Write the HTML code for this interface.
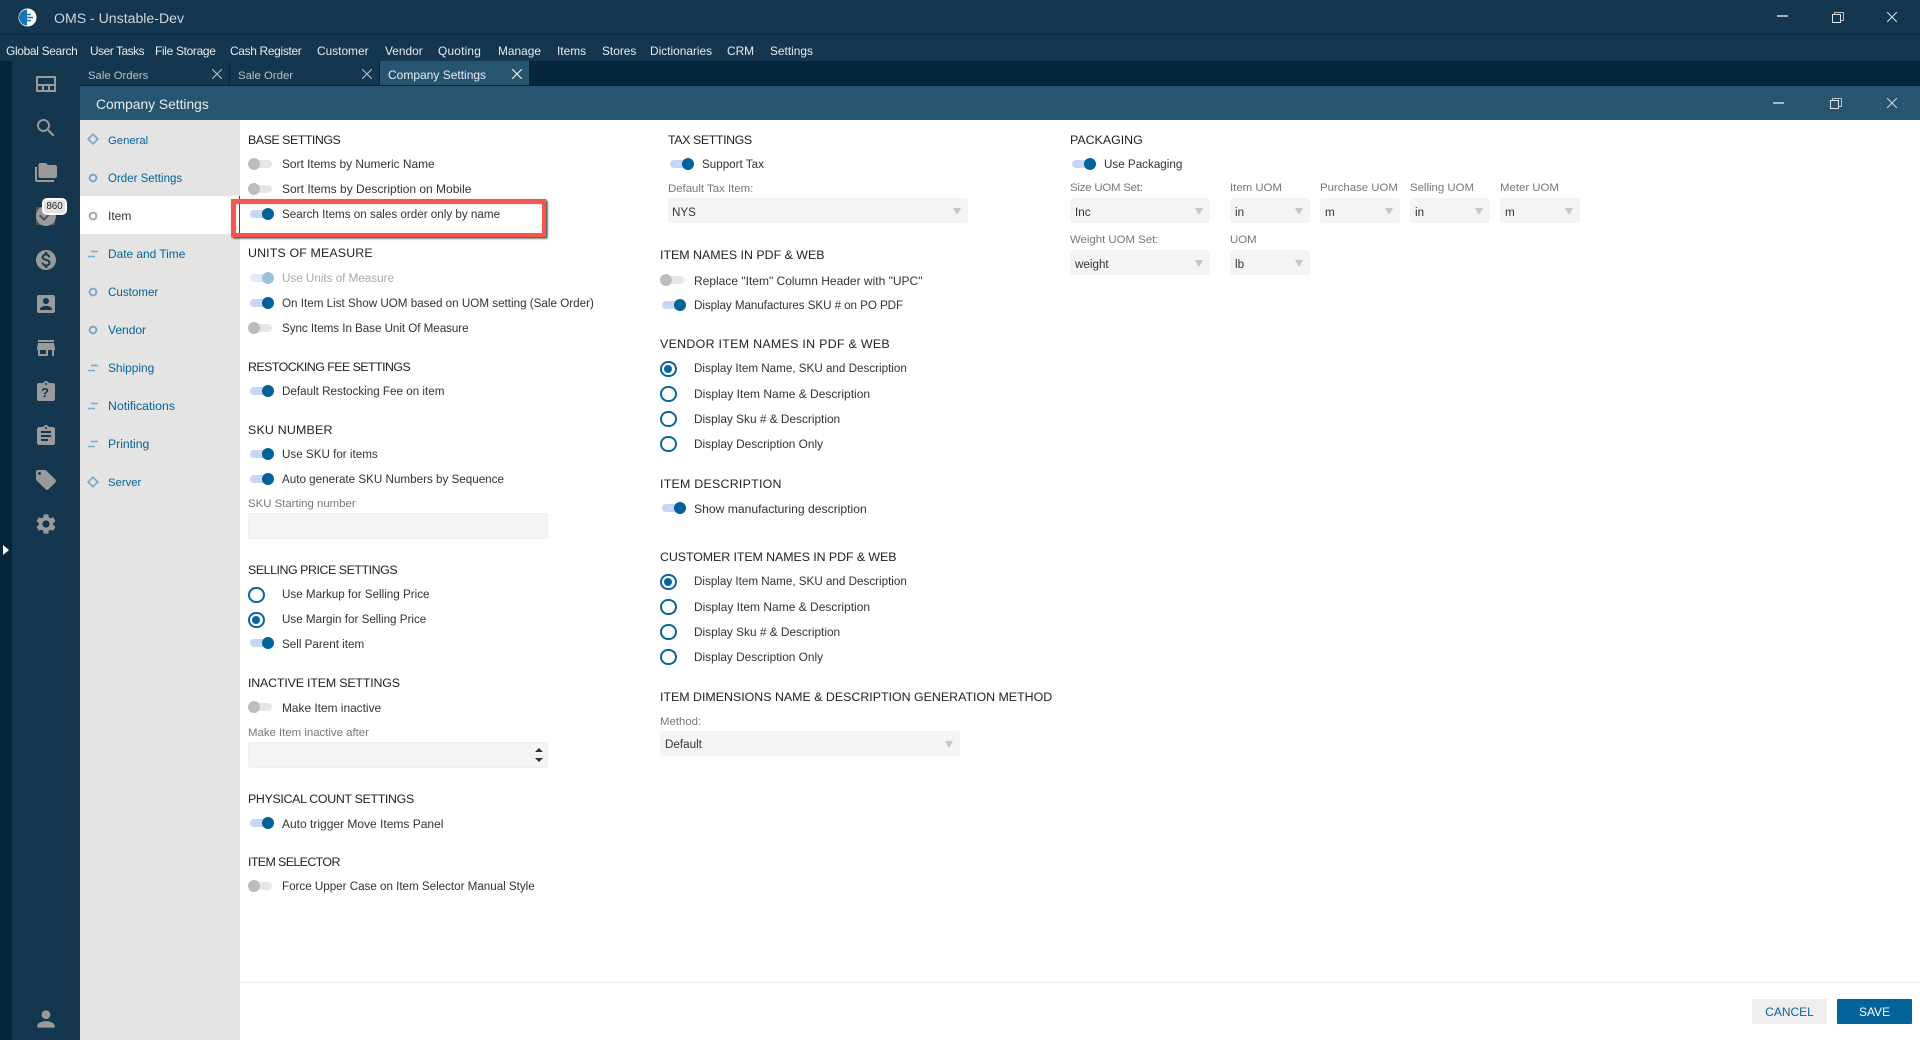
<!DOCTYPE html>
<html lang="en"><head><meta charset="utf-8"><title>OMS - Unstable-Dev</title>
<style>
html,body{margin:0;padding:0;width:1920px;height:1040px;overflow:hidden;background:#fff;font-family:"Liberation Sans",sans-serif;font-size:11.65px;color:#333}
div,span,svg{position:absolute}
.t{line-height:16px;white-space:nowrap;display:block}
.b{margin-top:1px}
.w{font-size:12px}
.m{color:#e6ecf0;top:43px;font-size:11.9px}
.n{color:#05639b;left:108px;font-size:12px}
.h{color:#222;font-size:12.4px}
.l{color:#777;font-size:11.4px}
.s{background:#f4f4f4;border-radius:3px;height:25px}
.s:after{content:"";position:absolute;right:7px;top:10px;border-left:4.5px solid transparent;border-right:4.5px solid transparent;border-top:7px solid #c6c6c6}
.tg{width:26px;height:12px}
.tg i{position:absolute;display:block}
.tg .tr{left:2px;top:2px;width:22px;height:8px;border-radius:4px;background:#c7d6f6}
.tg .kn{left:14px;top:0;width:12px;height:12px;border-radius:50%;background:#02629b}
.tg.off .tr{left:0;width:24px;background:#e6e6e6}
.tg.off .kn{left:0;background:#bcbcbc}
.tg.dis .tr{background:#e3eaf8}
.tg.dis .kn{background:#9cc3dc}
.r{width:12.6px;height:12.6px;border:2px solid #0a659c;border-radius:50%;background:#fff}
.r.c:after{content:"";position:absolute;left:2.3px;top:2.3px;width:8px;height:8px;border-radius:50%;background:#0a659c}
.ic{left:33.5px;width:24px;height:24px;fill:#9a9a9a}
.ni{left:87px;width:12px;height:12px;fill:none;stroke:#7da9c6;stroke-width:2}
</style></head><body>
<div style="left:0;top:0;width:1920px;height:61px;background:#14374f"></div>
<div style="left:0;top:34px;width:1920px;height:1px;background:#0c2a40"></div>
<div style="left:0;top:61px;width:1920px;height:25px;background:#07263c"></div>
<div style="left:0;top:61px;width:12px;height:979px;background:#07263c"></div>
<div style="left:12px;top:61px;width:68px;height:979px;background:#14374f"></div>

<svg style="left:18px;top:8px" width="19" height="19" viewBox="0 0 19 19"><circle cx="9.5" cy="9.5" r="9" fill="#fff"/><path d="M9 1.5A8 8 0 0 0 9 17.5Z" fill="#1a75b8"/><path d="M6 6.5h7M4 9.5h11M6 12.5h7" stroke="#1a75b8" stroke-width="1.5"/></svg>
<span class="t" style="left:54px;top:10px;font-size:14.1px;color:#ccd6dc">OMS - Unstable-Dev</span>

<span class="t m" style="left:6px;letter-spacing:-.3px">Global Search</span>
<span class="t m" style="left:90px;letter-spacing:-.45px">User Tasks</span>
<span class="t m" style="left:155px;letter-spacing:-.3px">File Storage</span>
<span class="t m" style="left:230px;letter-spacing:-.3px">Cash Register</span>
<span class="t m" style="left:317px">Customer</span>
<span class="t m" style="left:385px">Vendor</span>
<span class="t m" style="left:438px;letter-spacing:.2px">Quoting</span>
<span class="t m" style="left:498px">Manage</span>
<span class="t m" style="left:557px">Items</span>
<span class="t m" style="left:602px">Stores</span>
<span class="t m" style="left:650px">Dictionaries</span>
<span class="t m" style="left:727px">CRM</span>
<span class="t m" style="left:770px">Settings</span>

<svg style="left:1777px;top:15px" width="11" height="3"><rect width="11" height="2" fill="#a9b5bd"/></svg>
<svg style="left:1832px;top:12px" width="12" height="11" viewBox="0 0 12 11" fill="none" stroke="#dfe5ea"><rect x=".5" y="2.5" width="8" height="8"/><path d="M2.5 2.5V.5h9v8H8.500" stroke="#b6c2cb"/></svg>
<svg style="left:1887px;top:12px" width="10" height="10" stroke="#d0d8de" stroke-width="1.1"><path d="M0 0L10 10M10 0L0 10"/></svg>

<div style="left:80px;top:61px;width:149px;height:24px;background:#14374f"></div>
<div style="left:230px;top:61px;width:149px;height:24px;background:#14374f"></div>
<div style="left:380px;top:61px;width:149px;height:24px;background:#27556f"></div>
<span class="t b" style="left:88px;top:67px;color:#b3c0c9;font-size:11.3px">Sale Orders</span>
<span class="t b" style="left:238px;top:67px;color:#b3c0c9;font-size:11.4px">Sale Order</span>
<span class="t" style="left:388px;top:67px;color:#e6ecf0;font-size:12px">Company Settings</span>
<svg style="left:212px;top:69px" width="10" height="10" stroke="#b3c0c9" stroke-width="1.1"><path d="M0 0L10 10M10 0L0 10"/></svg>
<svg style="left:362px;top:69px" width="10" height="10" stroke="#b3c0c9" stroke-width="1.1"><path d="M0 0L10 10M10 0L0 10"/></svg>
<svg style="left:512px;top:69px" width="10" height="10" stroke="#f0f4f6" stroke-width="1.1"><path d="M0 0L10 10M10 0L0 10"/></svg>

<div style="left:80px;top:86px;width:1840px;height:34px;background:#27556f"></div>
<span class="t" style="left:96px;top:96.5px;font-size:13.8px;color:#e6ecf0">Company Settings</span>
<svg style="left:1773px;top:102px" width="11" height="3"><rect width="11" height="2" fill="#a9b5bd"/></svg>
<svg style="left:1830px;top:98px" width="12" height="11" viewBox="0 0 12 11" fill="none" stroke="#dfe5ea"><rect x=".5" y="2.5" width="8" height="8"/><path d="M2.5 2.5V.5h9v8H8.500" stroke="#b6c2cb"/></svg>
<svg style="left:1887px;top:98px" width="10" height="10" stroke="#d0d8de" stroke-width="1.1"><path d="M0 0L10 10M10 0L0 10"/></svg>

<!-- sidebar icons -->
<svg class="ic" style="top:72px" viewBox="0 0 24 24"><path d="M2 4h20v16H2zM4 6v6h16V6zM4 14v4h4v-4zM10 14v4h4v-4zM16 14v4h4v-4z" fill-rule="evenodd"/></svg>
<svg class="ic" style="top:116px" viewBox="0 0 24 24"><path d="M15.5 14h-.79l-.28-.27C15.41 12.59 16 11.11 16 9.5 16 5.91 13.09 3 9.5 3S3 5.91 3 9.5 5.91 16 9.5 16c1.61 0 3.09-.59 4.23-1.57l.27.28v.79l5 4.99L20.49 19l-4.99-5zm-6 0C7.01 14 5 11.99 5 9.5S7.01 5 9.5 5 14 7.01 14 9.5 11.99 14 9.5 14z"/></svg>
<svg class="ic" style="top:160px" viewBox="0 0 24 24"><path d="M3 7H1v13c0 1.1.9 2 2 2h17v-2H3V7zM21 5h-7l-2-2H6.500c-1.100 0-2 .9-2 2v11c0 1.100.9 2 2 2H21c1.100 0 2-.9 2-2V7c0-1.100-.9-2-2-2z"/></svg>
<div style="left:36px;top:207px;width:19px;height:18px;background:#555"></div>
<svg class="ic" style="top:204px" viewBox="0 0 24 24"><path d="M12 2C6.48 2 2 6.48 2 12s4.48 10 10 10 10-4.48 10-10S17.52 2 12 2zm-2 15l-5-5 1.41-1.41L10 14.17l7.59-7.59L19 8l-9 9z"/></svg>
<div style="left:42px;top:198px;width:21px;height:13px;background:#e2e2e2;border:2px solid #fff;border-radius:5px"></div>
<span class="t" style="left:44px;top:198px;width:21px;text-align:center;font-size:9.8px;color:#222;line-height:17px">860</span>
<svg class="ic" style="top:248px" viewBox="0 0 24 24"><path d="M12 2C6.48 2 2 6.48 2 12s4.48 10 10 10 10-4.48 10-10S17.52 2 12 2zm1.41 16.09V20h-2.67v-1.93c-1.71-.36-3.16-1.46-3.27-3.4h1.96c.1 1.05.82 1.87 2.65 1.87 1.96 0 2.4-.98 2.4-1.59 0-.83-.44-1.61-2.67-2.14-2.48-.6-4.18-1.62-4.18-3.67 0-1.72 1.39-2.84 3.11-3.21V4h2.67v1.95c1.86.45 2.79 1.86 2.85 3.39H14.3c-.05-1.11-.64-1.87-2.22-1.87-1.5 0-2.4.68-2.4 1.64 0 .84.65 1.39 2.67 1.91s4.18 1.39 4.18 3.91c-.01 1.83-1.38 2.83-3.12 3.16z"/></svg>
<svg class="ic" style="top:292px" viewBox="0 0 24 24"><path d="M3 5v14c0 1.1.89 2 2 2h14c1.1 0 2-.9 2-2V5c0-1.1-.9-2-2-2H5c-1.11 0-2 .9-2 2zm12 4c0 1.66-1.34 3-3 3s-3-1.34-3-3 1.34-3 3-3 3 1.34 3 3zm-9 8c0-2 4-3.1 6-3.1s6 1.1 6 3.1v1H6v-1z"/></svg>
<svg class="ic" style="top:336px" viewBox="0 0 24 24"><path d="M20 4H4v2h16V4zm1 10v-2l-1-5H4l-1 5v2h1v6h10v-6h4v6h2v-6h1zm-9 4H6v-4h6v4z"/></svg>
<svg class="ic" style="top:380px" viewBox="0 0 24 24"><path d="M19 3h-4.18C14.4 1.84 13.3 1 12 1c-1.3 0-2.4.84-2.82 2H5c-1.1 0-2 .9-2 2v14c0 1.1.9 2 2 2h14c1.1 0 2-.9 2-2V5c0-1.1-.9-2-2-2zm-7 0c.55 0 1 .45 1 1s-.45 1-1 1-1-.45-1-1 .45-1 1-1z"/></svg>
<span class="t" style="left:41px;top:385px;font-size:13px;font-weight:bold;color:#14374f">?</span>
<svg class="ic" style="top:424px" viewBox="0 0 24 24"><path d="M19 3h-4.18C14.4 1.84 13.3 1 12 1c-1.3 0-2.4.84-2.82 2H5c-1.1 0-2 .9-2 2v14c0 1.1.9 2 2 2h14c1.1 0 2-.9 2-2V5c0-1.1-.9-2-2-2zm-7 0c.55 0 1 .45 1 1s-.45 1-1 1-1-.45-1-1 .45-1 1-1zm2 14H7v-2h7v2zm3-4H7v-2h10v2zm0-4H7V7h10v2z"/></svg>
<svg class="ic" style="top:468px" viewBox="0 0 24 24"><path d="M21.41 11.58l-9-9C12.05 2.22 11.55 2 11 2H4c-1.1 0-2 .9-2 2v7c0 .55.22 1.05.59 1.42l9 9c.36.36.86.58 1.41.58.55 0 1.05-.22 1.41-.59l7-7c.37-.36.59-.86.59-1.41 0-.55-.23-1.06-.59-1.42zM5.5 7C4.67 7 4 6.33 4 5.5S4.67 4 5.5 4 7 4.67 7 5.5 6.33 7 5.5 7z"/></svg>
<svg class="ic" style="top:512px" viewBox="0 0 24 24"><path d="M19.14 12.94c.04-.3.06-.61.06-.94 0-.32-.02-.64-.07-.94l2.03-1.58c.18-.14.23-.41.12-.61l-1.92-3.32c-.12-.22-.37-.29-.59-.22l-2.39.96c-.5-.38-1.03-.7-1.62-.94l-.36-2.54c-.04-.24-.24-.41-.48-.41h-3.84c-.24 0-.43.17-.47.41l-.36 2.54c-.59.24-1.13.57-1.62.94l-2.39-.96c-.22-.08-.47 0-.59.22L2.74 8.87c-.12.21-.08.47.12.61l2.03 1.58c-.05.3-.09.63-.09.94s.02.64.07.94l-2.03 1.58c-.18.14-.23.41-.12.61l1.92 3.32c.12.22.37.29.59.22l2.39-.96c.5.38 1.03.7 1.62.94l.36 2.54c.05.24.24.41.48.41h3.84c.24 0 .44-.17.47-.41l.36-2.54c.59-.24 1.13-.56 1.62-.94l2.39.96c.22.08.47 0 .59-.22l1.92-3.32c.12-.22.07-.47-.12-.61l-2.01-1.58zM12 15.6c-1.98 0-3.6-1.62-3.6-3.6s1.62-3.6 3.6-3.6 3.6 1.62 3.6 3.6-1.62 3.6-3.6 3.6z"/></svg>
<svg style="left:3px;top:545px" width="6" height="10"><path d="M0 0L6 5L0 10Z" fill="#fff"/></svg>
<svg class="ic" style="top:1006px;width:26px;height:26px;left:32.5px" viewBox="0 0 24 24"><path d="M12 12c2.21 0 4-1.79 4-4s-1.79-4-4-4-4 1.79-4 4 1.79 4 4 4zm0 2c-2.67 0-8 1.34-8 4v2h16v-2c0-2.66-5.33-4-8-4z"/></svg>

<!-- left nav -->
<div style="left:80px;top:120px;width:160px;height:920px;background:#e4e4e4"></div>
<div style="left:80px;top:196px;width:160px;height:38px;background:#fff"></div>
<div style="left:238.5px;top:196px;width:1.5px;height:38px;background:#05639b"></div>

<svg class="ni" style="top:133px" viewBox="0 0 12 12"><path d="M6 1.2L10.800 6 6 10.800 1.2 6Z" stroke-width="1.7"/></svg>
<svg class="ni" style="top:171.5px" viewBox="0 0 12 12"><circle cx="6" cy="6" r="3.4"/></svg>
<svg class="ni" style="top:209.5px;stroke:#a8a8a8" viewBox="0 0 12 12"><circle cx="6" cy="6" r="3.4"/></svg>
<svg class="ni" style="top:247.5px" viewBox="0 0 12 12"><path d="M4 3.5h7M1 8.5h7" stroke-width="1.6"/></svg>
<svg class="ni" style="top:285.5px" viewBox="0 0 12 12"><circle cx="6" cy="6" r="3.4"/></svg>
<svg class="ni" style="top:323.5px" viewBox="0 0 12 12"><circle cx="6" cy="6" r="3.4"/></svg>
<svg class="ni" style="top:361.5px" viewBox="0 0 12 12"><path d="M4 3.5h7M1 8.5h7" stroke-width="1.6"/></svg>
<svg class="ni" style="top:399.5px" viewBox="0 0 12 12"><path d="M4 3.5h7M1 8.5h7" stroke-width="1.6"/></svg>
<svg class="ni" style="top:437.5px" viewBox="0 0 12 12"><path d="M4 3.5h7M1 8.5h7" stroke-width="1.6"/></svg>
<svg class="ni" style="top:475.5px" viewBox="0 0 12 12"><path d="M6 1.2L10.800 6 6 10.800 1.2 6Z" stroke-width="1.7"/></svg>

<span class="t n b" style="top:132px;font-size:11.3px">General</span>
<span class="t n b" style="top:170px;font-size:11.5px">Order Settings</span>
<span class="t n" style="top:208px;color:#333">Item</span>
<span class="t n" style="top:246px;font-size:11.9px">Date and Time</span>
<span class="t n b" style="top:284px;font-size:11.6px">Customer</span>
<span class="t n" style="top:322px">Vendor</span>
<span class="t n" style="top:360px;font-size:11.9px">Shipping</span>
<span class="t n" style="top:398px;font-size:12.3px">Notifications</span>
<span class="t n" style="top:436px;font-size:12.2px">Printing</span>
<span class="t n b" style="top:474px;font-size:11.3px">Server</span>

<!-- column 1 -->
<span class="t h" style="left:248px;top:132px;letter-spacing:-.47px">BASE SETTINGS</span>
<div class="tg off" style="left:248px;top:158px"><i class="tr"></i><i class="kn"></i></div><span class="t" style="left:282px;top:156px;font-size:11.9px">Sort Items by Numeric Name</span>
<div class="tg off" style="left:248px;top:183px"><i class="tr"></i><i class="kn"></i></div><span class="t w" style="left:282px;top:181px">Sort Items by Description on Mobile</span>
<div class="tg" style="left:248px;top:208px"><i class="tr"></i><i class="kn"></i></div><span class="t b" style="left:282px;top:206px">Search Items on sales order only by name</span>
<div style="left:231px;top:199px;width:307px;height:30px;border:4px solid #f4574e;box-shadow:1.5px 1.5px 2px #444, inset 1px 1px 1px #777"></div>
<span class="t h" style="left:248px;top:245px;letter-spacing:.14px">UNITS OF MEASURE</span>
<div class="tg dis" style="left:248px;top:272px"><i class="tr"></i><i class="kn"></i></div><span class="t b" style="left:282px;top:270px;color:#aaa">Use Units of Measure</span>
<div class="tg" style="left:248px;top:297px"><i class="tr"></i><i class="kn"></i></div><span class="t b" style="left:282px;top:295px">On Item List Show UOM based on UOM setting (Sale Order)</span>
<div class="tg off" style="left:248px;top:322px"><i class="tr"></i><i class="kn"></i></div><span class="t b" style="left:282px;top:320px;letter-spacing:-.05px">Sync Items In Base Unit Of Measure</span>
<span class="t h" style="left:248px;top:359px;letter-spacing:-.54px">RESTOCKING FEE SETTINGS</span>
<div class="tg" style="left:248px;top:385px"><i class="tr"></i><i class="kn"></i></div><span class="t b" style="left:282px;top:383px">Default Restocking Fee on item</span>
<span class="t h" style="left:248px;top:422px;letter-spacing:.2px">SKU NUMBER</span>
<div class="tg" style="left:248px;top:448px"><i class="tr"></i><i class="kn"></i></div><span class="t b" style="left:282px;top:446px">Use SKU for items</span>
<div class="tg" style="left:248px;top:473px"><i class="tr"></i><i class="kn"></i></div><span class="t b" style="left:282px;top:471px">Auto generate SKU Numbers by Sequence</span>
<span class="t l" style="left:248px;top:496px">SKU Starting number</span>
<div style="left:247.5px;top:513px;width:298px;height:24px;background:#f4f4f4;border:1px solid #eee;border-radius:2px"></div>
<span class="t h" style="left:248px;top:562px;letter-spacing:-.45px">SELLING PRICE SETTINGS</span>
<div class="r" style="left:248px;top:586.5px"></div><span class="t b" style="left:282px;top:586px">Use Markup for Selling Price</span>
<div class="r c" style="left:248px;top:611.5px"></div><span class="t b" style="left:282px;top:611px">Use Margin for Selling Price</span>
<div class="tg" style="left:248px;top:637px"><i class="tr"></i><i class="kn"></i></div><span class="t b" style="left:282px;top:636px">Sell Parent item</span>
<span class="t h" style="left:248px;top:675px;letter-spacing:-.17px">INACTIVE ITEM SETTINGS</span>
<div class="tg off" style="left:248px;top:701px"><i class="tr"></i><i class="kn"></i></div><span class="t w" style="left:282px;top:700px;font-size:11.9px">Make Item inactive</span>
<span class="t l" style="left:248px;top:725px">Make Item inactive after</span>
<div style="left:247.5px;top:742px;width:298px;height:24px;background:#f4f4f4;border:1px solid #eee;border-radius:2px"></div>
<svg style="left:535px;top:747px" width="8" height="16"><path d="M0 5L4 1L8 5ZM0 11L8 11L4 15Z" fill="#333"/></svg>
<span class="t h" style="left:248px;top:791px;letter-spacing:-.33px">PHYSICAL COUNT SETTINGS</span>
<div class="tg" style="left:248px;top:817px"><i class="tr"></i><i class="kn"></i></div><span class="t w" style="left:282px;top:816px">Auto trigger Move Items Panel</span>
<span class="t h" style="left:248px;top:854px;letter-spacing:-.6px">ITEM SELECTOR</span>
<div class="tg off" style="left:248px;top:880px"><i class="tr"></i><i class="kn"></i></div><span class="t b" style="left:282px;top:878px;letter-spacing:-.02px">Force Upper Case on Item Selector Manual Style</span>

<!-- column 2 -->
<span class="t h" style="left:668px;top:132px;letter-spacing:-.4px">TAX SETTINGS</span>
<div class="tg" style="left:668px;top:158px"><i class="tr"></i><i class="kn"></i></div><span class="t b" style="left:702px;top:156px">Support Tax</span>
<span class="t l" style="left:668px;top:181px">Default Tax Item:</span>
<div class="s" style="left:668px;top:198px;width:300px"></div><span class="t b" style="left:672px;top:204px">NYS</span>
<span class="t h" style="left:660px;top:247px">ITEM NAMES IN PDF &amp; WEB</span>
<div class="tg off" style="left:660px;top:274px"><i class="tr"></i><i class="kn"></i></div><span class="t w" style="left:694px;top:273px">Replace "Item" Column Header with "UPC"</span>
<div class="tg" style="left:660px;top:299px"><i class="tr"></i><i class="kn"></i></div><span class="t b" style="left:694px;top:297px;letter-spacing:-.07px">Display Manufactures SKU # on PO PDF</span>
<span class="t h" style="left:660px;top:336px;letter-spacing:.3px">VENDOR ITEM NAMES IN PDF &amp; WEB</span>
<div class="r c" style="left:660px;top:360.5px"></div><span class="t b" style="left:694px;top:360px">Display Item Name, SKU and Description</span>
<div class="r" style="left:660px;top:385.5px"></div><span class="t w" style="left:694px;top:386px">Display Item Name &amp; Description</span>
<div class="r" style="left:660px;top:410.5px"></div><span class="t" style="left:694px;top:411px;font-size:11.85px">Display Sku # &amp; Description</span>
<div class="r" style="left:660px;top:435.5px"></div><span class="t" style="left:694px;top:436px;font-size:11.85px">Display Description Only</span>
<span class="t h" style="left:660px;top:476px;letter-spacing:.25px">ITEM DESCRIPTION</span>
<div class="tg" style="left:660px;top:502px"><i class="tr"></i><i class="kn"></i></div><span class="t" style="left:694px;top:501px;font-size:12.15px">Show manufacturing description</span>
<span class="t h" style="left:660px;top:549px;letter-spacing:-.07px">CUSTOMER ITEM NAMES IN PDF &amp; WEB</span>
<div class="r c" style="left:660px;top:573.5px"></div><span class="t b" style="left:694px;top:573px">Display Item Name, SKU and Description</span>
<div class="r" style="left:660px;top:598.5px"></div><span class="t w" style="left:694px;top:599px">Display Item Name &amp; Description</span>
<div class="r" style="left:660px;top:623.5px"></div><span class="t" style="left:694px;top:624px;font-size:11.85px">Display Sku # &amp; Description</span>
<div class="r" style="left:660px;top:648.5px"></div><span class="t" style="left:694px;top:649px;font-size:11.85px">Display Description Only</span>
<span class="t h" style="left:660px;top:689px">ITEM DIMENSIONS NAME &amp; DESCRIPTION GENERATION METHOD</span>
<span class="t l" style="left:660px;top:714px">Method:</span>
<div class="s" style="left:660px;top:731px;width:300px"></div><span class="t b" style="left:665px;top:736px">Default</span>

<!-- column 3 -->
<span class="t h" style="left:1070px;top:132px">PACKAGING</span>
<div class="tg" style="left:1070px;top:158px"><i class="tr"></i><i class="kn"></i></div><span class="t b" style="left:1104px;top:156px">Use Packaging</span>
<span class="t l" style="left:1070px;top:180px;letter-spacing:-.2px">Size UOM Set:</span>
<span class="t l" style="left:1230px;top:180px">Item UOM</span>
<span class="t l" style="left:1320px;top:180px">Purchase UOM</span>
<span class="t l" style="left:1410px;top:180px">Selling UOM</span>
<span class="t l" style="left:1500px;top:180px">Meter UOM</span>
<div class="s" style="left:1070px;top:198px;width:140px"></div><span class="t b" style="left:1075px;top:204px">Inc</span>
<div class="s" style="left:1230px;top:198px;width:80px"></div><span class="t b" style="left:1235px;top:204px">in</span>
<div class="s" style="left:1320px;top:198px;width:80px"></div><span class="t b" style="left:1325px;top:204px">m</span>
<div class="s" style="left:1410px;top:198px;width:80px"></div><span class="t b" style="left:1415px;top:204px">in</span>
<div class="s" style="left:1500px;top:198px;width:80px"></div><span class="t b" style="left:1505px;top:204px">m</span>
<span class="t l" style="left:1070px;top:232px">Weight UOM Set:</span>
<span class="t l" style="left:1230px;top:232px">UOM</span>
<div class="s" style="left:1070px;top:250px;width:140px"></div><span class="t b" style="left:1075px;top:256px">weight</span>
<div class="s" style="left:1230px;top:250px;width:80px"></div><span class="t b" style="left:1235px;top:256px">lb</span>

<!-- footer -->
<div style="left:240px;top:982px;width:1680px;height:1px;background:#ececec"></div>
<div style="left:1752px;top:999px;width:75px;height:25px;background:#eee"></div>
<span class="t" style="left:1752px;top:1004px;width:75px;text-align:center;color:#0a649c;font-size:12px">CANCEL</span>
<div style="left:1837px;top:999px;width:75px;height:25px;background:#03639a;border-radius:1px"></div>
<span class="t" style="left:1837px;top:1004px;width:75px;text-align:center;color:#fff;font-size:12px">SAVE</span>
</body></html>
